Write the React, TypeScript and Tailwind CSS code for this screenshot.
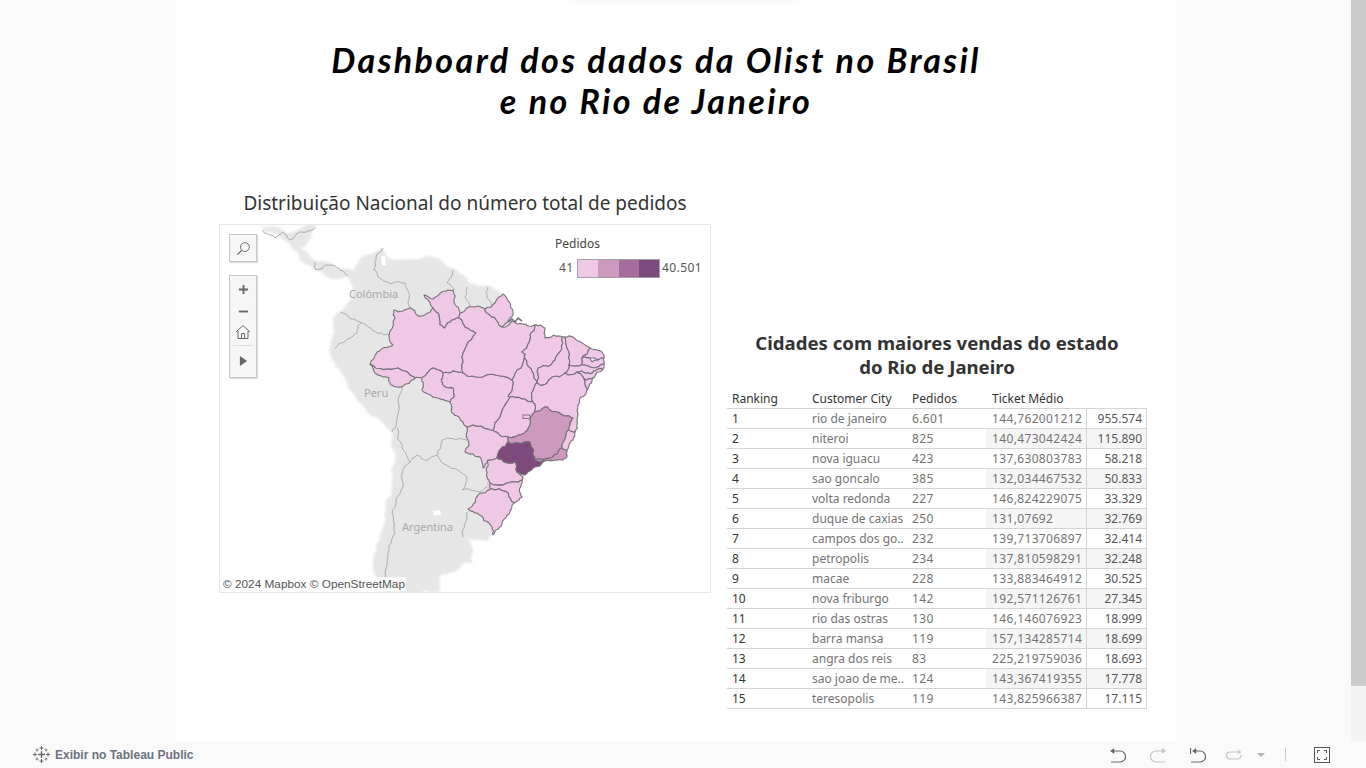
const rows = [
  ["1", "rio de janeiro", "6.601", "144,762001212", "955.574"],
  ["2", "niteroi", "825", "140,473042424", "115.890"],
  ["3", "nova iguacu", "423", "137,630803783", "58.218"],
  ["4", "sao goncalo", "385", "132,034467532", "50.833"],
  ["5", "volta redonda", "227", "146,824229075", "33.329"],
  ["6", "duque de caxias", "250", "131,07692", "32.769"],
  ["7", "campos dos go..", "232", "139,713706897", "32.414"],
  ["8", "petropolis", "234", "137,810598291", "32.248"],
  ["9", "macae", "228", "133,883464912", "30.525"],
  ["10", "nova friburgo", "142", "192,571126761", "27.345"],
  ["11", "rio das ostras", "130", "146,146076923", "18.999"],
  ["12", "barra mansa", "119", "157,134285714", "18.699"],
  ["13", "angra dos reis", "83", "225,219759036", "18.693"],
  ["14", "sao joao de me..", "124", "143,367419355", "17.778"],
  ["15", "teresopolis", "119", "143,825966387", "17.115"],
];

const LIGHT = "#efc8e6";
const MID = "#cc99bf";
const DARK = "#7c4b7b";

const states: { fill: string; points: string }[] = [
  { fill: LIGHT, points: "424,295 433,299 448,290 453,290 454,302 460,313 459,318 452,320 445,328 440,325 438,313 433,308 428,300" },
  { fill: LIGHT, points: "394,310 410,308 418,316 433,308 438,313 440,325 445,328 452,320 459,318 465,327 476,333 463,361 463,373 443,373 433,368 422,378 415,378 398,368 370,364 377,352 393,345 395,318 393,315" },
  { fill: LIGHT, points: "370,364 398,368 415,378 402,387 391,385 389,378 375,373" },
  { fill: LIGHT, points: "422,378 433,368 443,373 444,386 453,388 454,397 450,402 437,398 422,390" },
  { fill: LIGHT, points: "443,373 463,373 472,376 512,380 508,396 510,397 495,423 493,430 490,430 473,425 467,427 463,422 452,413 450,402 454,397 453,388 444,386" },
  { fill: LIGHT, points: "460,313 475,307 485,309 497,321 502,327 513,321 523,324 535,325 530,339 522,352 525,354 512,380 472,376 463,373 463,361 476,333 465,327 459,318" },
  { fill: LIGHT, points: "485,309 503,294 513,312 502,327 497,321" },
  { fill: LIGHT, points: "535,325 545,328 545,338 562,337 555,360 538,368 537,383 533,373 527,365 525,354 522,352 530,339" },
  { fill: LIGHT, points: "525,354 527,365 533,373 537,383 535,385 533,402 520,398 510,397 508,396 512,380" },
  { fill: LIGHT, points: "562,337 565,337 569,365 565,373 552,377 547,383 540,385 537,383 538,368 555,360" },
  { fill: LIGHT, points: "565,337 573,337 590,348 582,358 582,365 569,365" },
  { fill: LIGHT, points: "590,348 602,352 604,358 590,358 585,357 582,358" },
  { fill: LIGHT, points: "582,358 585,357 590,358 592,362 604,358 604,364 590,367 582,365" },
  { fill: LIGHT, points: "569,365 582,365 590,367 604,364 603,369 592,373 587,373 577,372 568,375 565,373" },
  { fill: LIGHT, points: "587,373 592,373 603,369 593,378 587,380 583,377 577,372" },
  { fill: LIGHT, points: "583,377 587,380 593,378 587,390 585,385" },
  { fill: LIGHT, points: "537,383 540,385 547,383 552,377 565,373 568,375 577,372 583,377 585,385 587,390 580,398 578,415 575,432 568,430 573,418 557,412 547,407 535,412 533,402 535,385" },
  { fill: LIGHT, points: "510,397 520,398 533,402 535,412 530,420 528,430 508,437 493,430 495,423" },
  { fill: LIGHT, points: "467,427 473,425 490,430 493,430 508,437 508,442 497,458 488,460 483,468 480,457 465,452 468,440" },
  { fill: LIGHT, points: "568,430 575,432 573,440 567,450 562,448" },
  { fill: MID, points: "535,412 547,407 557,412 573,418 568,430 562,448 557,454 535,460 530,442 508,442 508,437 528,430 530,420" },
  { fill: MID, points: "535,460 557,454 562,448 567,450 567,457 563,460 547,460" },
  { fill: LIGHT, points: "488,460 497,458 515,462 517,472 523,477 522,480 507,483 490,483 487,477" },
  { fill: LIGHT, points: "490,483 507,483 522,480 522,497 514,503 508,493 490,489" },
  { fill: LIGHT, points: "490,489 508,493 514,503 502,522 493,535 492,527 477,513 468,509 480,493" },
  { fill: DARK, points: "508,442 530,442 535,460 547,460 540,466 525,475 517,472 515,462 497,458" },
];

const borders = [
  "383,248 375,262 378,277 405,283 408,303 417,315",
  "453,270 447,283 455,290",
  "467,287 465,297 470,307",
  "488,287 487,297 492,306",
  "340,312 360,322 377,333 393,337",
  "362,322 357,333 340,343 335,348",
  "400,365 402,390 397,420 392,432",
  "397,428 403,450 410,462",
  "410,462 417,455 428,460 437,455",
  "437,455 442,440 460,438 467,440",
  "437,455 467,477 462,490 480,492 490,480",
  "410,462 402,473 403,487 392,513 395,533 387,560 385,590",
  "467,512 463,537",
  "262,230 275,238 283,232 290,240 300,232 315,228",
  "315,262 316,270 327,265 338,268 348,276",
];

type Pt = [number, number];

// roughen straight edges so that the outlines read like a map; the offset only
// depends on the edge's two ends, so neighbouring states keep a shared border
function roughEdge(a: Pt, b: Pt, depth: number): Pt[] {
  const swap = a[0] > b[0] || (a[0] === b[0] && a[1] > b[1]);
  const [p, q] = swap ? [b, a] : [a, b];
  const dx = q[0] - p[0];
  const dy = q[1] - p[1];
  const len = Math.hypot(dx, dy);
  if (depth === 0 || len < 2.5) return [b];
  const seed = Math.sin(p[0] * 12.9898 + p[1] * 78.233 + q[0] * 37.719 + q[1] * 11.13) * 43758.5453;
  const off = (seed - Math.floor(seed) - 0.5) * 0.32;
  const mid: Pt = [(p[0] + q[0]) / 2 - dy * off, (p[1] + q[1]) / 2 + dx * off];
  return [...roughEdge(a, mid, depth - 1), ...roughEdge(mid, b, depth - 1)];
}

function rough(points: string, closed: boolean) {
  const pts = points.split(" ").map((pair) => pair.split(",").map(Number) as Pt);
  const out: Pt[] = [pts[0]];
  const edges = closed ? pts.length : pts.length - 1;
  for (let i = 0; i < edges; i++) {
    out.push(...roughEdge(pts[i], pts[(i + 1) % pts.length], 3));
  }
  return out.map((p) => `${p[0].toFixed(1)},${p[1].toFixed(1)}`).join(" ");
}

function BrazilMap() {
  return (
    <svg viewBox="220 225 490 367" className="block w-[490px] h-[367px]">
      <defs>
        <filter id="soft" x="-5%" y="-5%" width="110%" height="110%">
          <feGaussianBlur stdDeviation="0.8" />
        </filter>
      </defs>
      <polygon
        fill="#e6e6e6"
        filter="url(#soft)"
        points={rough(
          "257,225 317,225 315,228 307,245 300,248 310,257 317,262 333,265 348,268 352,270 360,258 372,254 383,248 387,257 407,260 433,257 453,268 460,274 470,284 490,286 503,294 512,320 505,400 510,470 500,500 490,520 492,535 487,542 467,538 473,553 472,563 453,572 440,575 440,592 383,592 377,577 373,563 383,527 385,503 392,467 392,433 377,417 360,403 350,390 345,377 335,367 330,347 333,317 348,303 353,290 350,282 347,277 327,277 315,270 300,260 287,242 265,232",
          true,
        )}
      />
      <polygon fill="#ffffff" points="381,256 385,256 386,265 382,266" />
      <polygon fill="#ffffff" points="433,511 440,510 441,515 434,515" />
      {borders.map((points) => (
        <polyline key={points} points={rough(points, false)} fill="none" stroke="#adadad" strokeWidth="1" />
      ))}
      <polygon fill={LIGHT} points="400,350 440,332 505,332 590,355 575,420 540,455 515,475 505,500 485,500 490,465 470,435 440,385 400,362" />
      {states.map((state) => (
        <polygon
          key={state.points}
          points={rough(state.points, true)}
          fill={state.fill}
          stroke="#77717a"
          strokeWidth="1.1"
          strokeLinejoin="round"
        />
      ))}
      <rect x="523" y="415" width="7" height="3.5" fill={LIGHT} stroke="#77717a" strokeWidth="0.9" />
      <polyline points="508,322 512,319 515,322 518,318 522,321" fill="none" stroke="#77717a" strokeWidth="1.6" />
      <g fill="#a9a9a9" fontSize="11" fontFamily="'Noto Sans', sans-serif">
        <text x="349" y="298">Colômbia</text>
        <text x="364" y="397">Peru</text>
        <text x="402" y="531">Argentina</text>
      </g>
    </svg>
  );
}

function MapControls() {
  return (
    <div className="absolute left-[9px] top-[9px] flex flex-col gap-[13px] text-[#666666]">
      <div className="flex h-[28px] w-[28px] items-center justify-center border border-[#c8c8c8] bg-[#f6f6f6] shadow-[1px_1px_1px_#dddddd]">
        <svg viewBox="0 0 16 16" className="h-[15px] w-[15px]" fill="none" stroke="currentColor" strokeWidth="1">
          <circle cx="9.5" cy="6.5" r="4.7" />
          <path d="M6 10 L1.5 14.5" strokeWidth="1.4" />
        </svg>
      </div>
      <div className="flex h-[103px] w-[28px] flex-col items-center border border-[#c8c8c8] bg-[#f6f6f6] shadow-[1px_1px_1px_#dddddd]">
        <svg viewBox="0 0 12 12" className="mt-[8px] h-[11px] w-[11px]" stroke="currentColor" strokeWidth="2">
          <path d="M6 1 V11 M1 6 H11" />
        </svg>
        <svg viewBox="0 0 12 12" className="mt-[11px] h-[11px] w-[11px]" stroke="currentColor" strokeWidth="2">
          <path d="M1 6 H11" />
        </svg>
        <svg viewBox="0 0 16 16" className="mt-[7px] h-[16px] w-[16px]" fill="none" stroke="currentColor" strokeWidth="1">
          <path d="M1 8 L8 1.5 L15 8 M3 7 V14.5 H13 V7 M6.5 14.5 V9.5 H9.5 V14.5" />
        </svg>
        <div className="mt-[5px] h-px w-[20px] bg-[#dddddd]" />
        <svg viewBox="0 0 10 12" className="mt-[9px] h-[12px] w-[9px]" fill="currentColor">
          <path d="M1 0.5 L9 6 L1 11.5 Z" />
        </svg>
      </div>
    </div>
  );
}

function MapLegend() {
  return (
    <div className="absolute left-[335px] top-[11px] text-[12px] text-[#444444]">
      <div className="leading-[16px]">Pedidos</div>
      <div className="ml-[4px] mt-[7px] flex h-[18px] items-center tracking-[0.4px]">
        <span className="w-[18px] text-[#555555]">41</span>
        <div className="flex h-[19px] w-[83px] border border-[#a89ca8]">
          <div className="flex-1 bg-[#efc8e6]" />
          <div className="flex-1 bg-[#cc99bf]" />
          <div className="flex-1 bg-[#a56d9e]" />
          <div className="flex-1 bg-[#7c4b7b]" />
        </div>
        <span className="ml-[2px] text-[#555555]">40.501</span>
      </div>
    </div>
  );
}

function DataTable() {
  return (
    <div className="w-[420px] text-[12px]">
      <div className="grid h-[20px] grid-cols-[80px_100px_79px_100px_61px] grid-rows-[19px] border-b border-[#d4d4d4] leading-[20px] text-[#333333]">
        <div className="pl-[5px]">Ranking</div>
        <div className="pl-[5px]">Customer City</div>
        <div className="pl-[5px]">Pedidos</div>
        <div className="pl-[6px]">Ticket Médio</div>
        <div />
      </div>
      {rows.map((row, i) => {
        const shaded = i % 2 === 1;
        return (
          <div
            key={row[0]}
            className="grid h-[20px] grid-cols-[80px_100px_79px_100px_61px] grid-rows-[19px] border-b border-[#d4d4d4] leading-[20px] text-[#737373]"
          >
            <div className="pl-[5px] text-[#333333]">{row[0]}</div>
            <div className="whitespace-nowrap pl-[5px]">{row[1]}</div>
            <div className="pl-[5px] tracking-[0.35px]">{row[2]}</div>
            <div className={shaded ? "bg-[#f5f5f5] pl-[6px] tracking-[0.35px]" : "pl-[6px] tracking-[0.35px]"}>{row[3]}</div>
            <div
              className={
                shaded
                  ? "border-x border-[#d4d4d4] bg-[#f5f5f5] pr-[4px] text-right text-[#555555]"
                  : "border-x border-[#d4d4d4] pr-[4px] text-right text-[#555555]"
              }
            >
              {row[4]}
            </div>
          </div>
        );
      })}
    </div>
  );
}

function TableauLogo() {
  return (
    <svg viewBox="0 0 17 17" className="h-[17px] w-[17px]" stroke="#666666" fill="none">
      <path d="M8.5 5 V12 M5 8.5 H12" strokeWidth="1.4" />
      <path d="M8.5 0 V4 M6.5 2 H10.5 M8.5 13 V17 M6.5 15 H10.5 M0 8.5 H4 M2 6.5 V10.5 M13 8.5 H17 M15 6.5 V10.5" strokeWidth="1" />
      <path d="M4 2.5 V5.5 M2.5 4 H5.5 M13 2.5 V5.5 M11.5 4 H14.5 M4 11.5 V14.5 M2.5 13 H5.5 M13 11.5 V14.5 M11.5 13 H14.5" strokeWidth="0.8" />
    </svg>
  );
}

function Toolbar() {
  return (
    <div className="flex h-[27px] items-center bg-[#fafafa]">
      <div className="ml-[33px] flex items-center gap-[5px]">
        <TableauLogo />
        <span className="font-['Liberation_Sans',sans-serif] text-[12px] font-bold text-[#6b7280]">Exibir no Tableau Public</span>
      </div>
      <div className="ml-auto mr-[36px] flex items-center">
        <svg viewBox="0 0 16 16" className="h-[16px] w-[16px]" fill="none" stroke="#666666" strokeWidth="1.2">
          <path d="M1 4 H10 A5 5 0 0 1 10 15 H1" />
          <path d="M0.5 4 L4 1.5 V6.5 Z" fill="#666666" strokeWidth="0.5" />
        </svg>
        <svg viewBox="0 0 16 16" className="ml-[24px] h-[16px] w-[16px]" fill="none" stroke="#c4c4c4" strokeWidth="1.2">
          <path d="M15 4 H6 A5 5 0 0 0 6 15 H15" />
          <path d="M15.5 4 L12 1.5 V6.5 Z" fill="#c4c4c4" strokeWidth="0.5" />
        </svg>
        <svg viewBox="0 0 16 16" className="ml-[24px] h-[16px] w-[16px]" fill="none" stroke="#666666" strokeWidth="1.2">
          <path d="M3 4 H10 A5 5 0 0 1 10 15 H1" />
          <path d="M0.5 1 V7" />
          <path d="M2.5 4 L6 1.5 V6.5 Z" fill="#666666" strokeWidth="0.5" />
        </svg>
        <svg viewBox="0 0 16 16" className="ml-[20px] h-[16px] w-[16px]" fill="none" stroke="#c4c4c4" strokeWidth="1.2">
          <path d="M11 5 H4 A3.5 3.5 0 0 0 4 12 H12 A3.5 3.5 0 0 0 15 8" />
          <path d="M15 5 L12 3 V7 Z" fill="#c4c4c4" strokeWidth="0.5" />
        </svg>
        <svg viewBox="0 0 8 4" className="ml-[15px] h-[4px] w-[8px]" fill="#b5b5b5">
          <path d="M0 0 H8 L4 4 Z" />
        </svg>
        <div className="ml-[20px] h-[13px] w-px bg-[#cccccc]" />
        <svg viewBox="0 0 16 16" className="ml-[28px] h-[16px] w-[16px]" fill="none" stroke="#555555" strokeWidth="1">
          <rect x="0.5" y="0.5" width="15" height="15" />
          <path d="M3.5 6 V3.5 H6 M10 3.5 H12.5 V6 M12.5 10 V12.5 H10 M6 12.5 H3.5 V10" />
        </svg>
      </div>
    </div>
  );
}

export default function App() {
  return (
    <div className="relative flex h-screen flex-col overflow-hidden bg-[#fafafa] font-['Noto_Sans',sans-serif]">
      <div className="absolute left-[570px] top-[-4px] h-[4px] w-[230px] shadow-[0_1px_5px_rgba(0,0,0,0.05)]" />
      <div className="flex flex-1 min-h-0">
        <div className="ml-[176px] w-[1000px] bg-white">
          <h1 className="ml-[150px] mt-[39px] w-[660px] text-center font-['Lato',sans-serif] text-[34px] font-bold italic leading-[41px] tracking-[2.4px] text-black">
            Dashboard dos dados da Olist no Brasil
            <br />
            e no Rio de Janeiro
          </h1>
          <div className="flex items-start">
            <div className="ml-[43px] mt-[67px] w-[492px]">
              <h2 className="mb-[6px] h-[30px] text-center text-[19px] leading-[30px] text-[#333333]">
                Distribuição Nacional do número total de pedidos
              </h2>
              <div className="relative border border-[#e6e6e6]">
                <BrazilMap />
                <MapControls />
                <MapLegend />
                <div className="absolute bottom-[1px] left-[2px] bg-white/80 px-[1px] font-['Liberation_Sans',sans-serif] text-[11.8px] leading-[14px] text-[#555555]">
                  © 2024 Mapbox © OpenStreetMap
                </div>
              </div>
            </div>
            <div className="ml-[16px] mt-[210px] w-[420px]">
              <h2 className="mb-[10px] text-center text-[18.6px] font-bold leading-[24px] text-[#333333]">
                Cidades com maiores vendas do estado
                <br />
                do Rio de Janeiro
              </h2>
              <DataTable />
            </div>
          </div>
        </div>
        <div className="ml-auto flex w-[15px] flex-col bg-[#f4f4f4]">
          <div className="h-[686px] bg-[#cbcbcb]" />
        </div>
      </div>
      <Toolbar />
    </div>
  );
}
